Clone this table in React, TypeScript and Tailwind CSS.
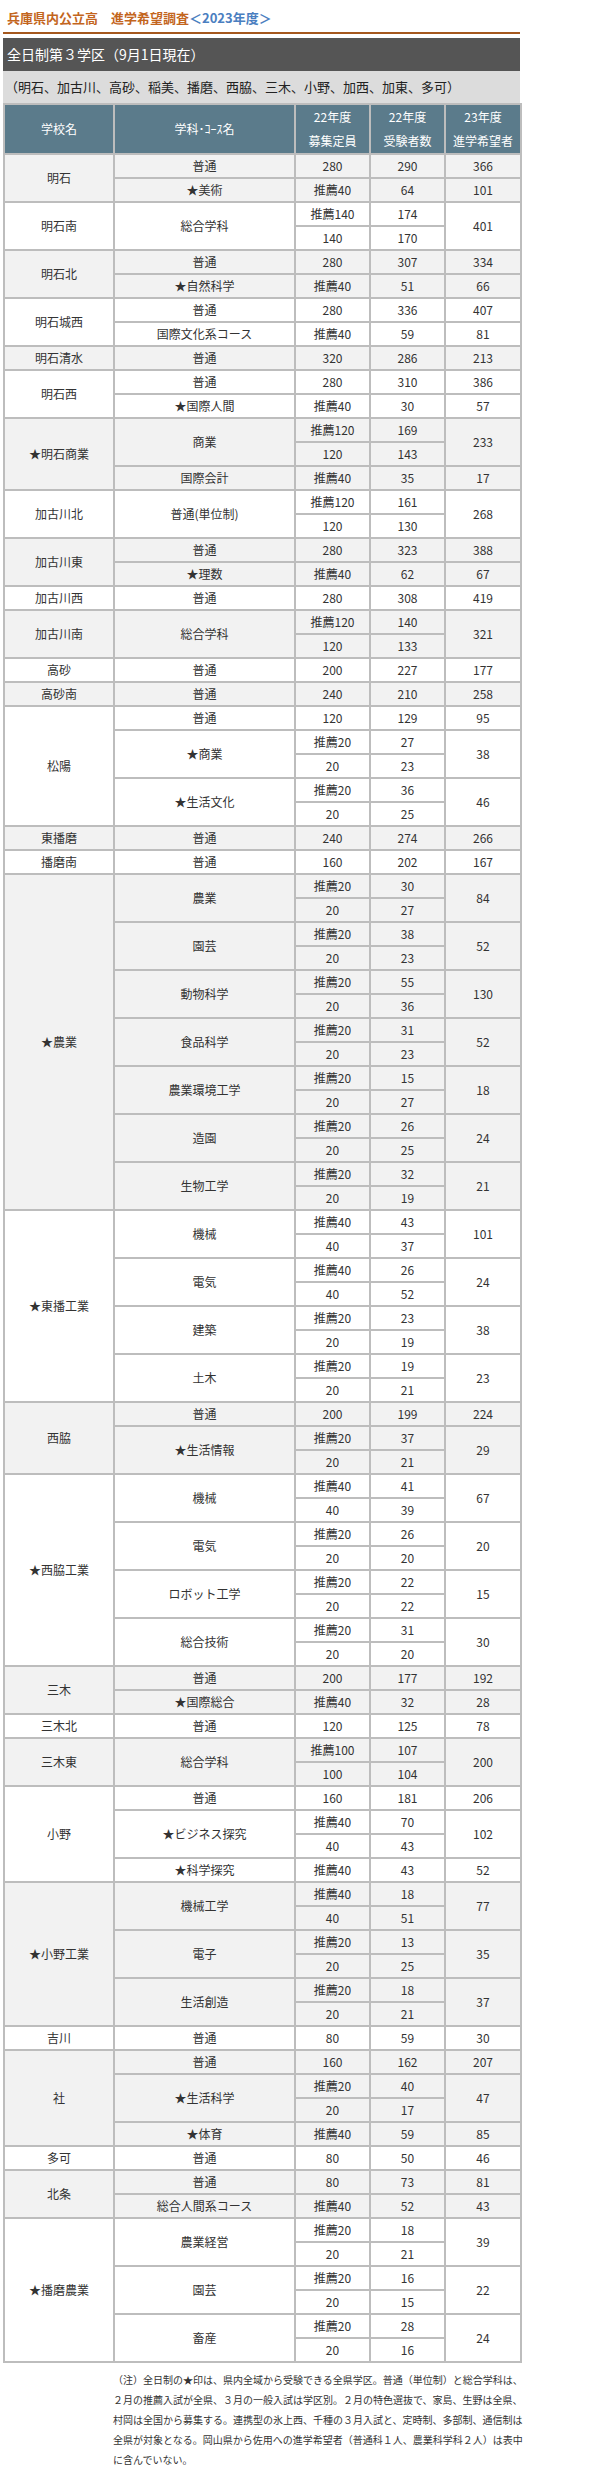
import React from "react";

type Sub = { c: string; r: [string, string][]; h: string };
type School = { name: string; subs: Sub[] };

const S = (c: string, a: string, b: string, h: string): Sub => ({ c, r: [[a, b]], h });
const D = (c: string, q: string, a: string, n: string, b: string, h: string): Sub => ({
  c,
  r: [
    [q, a],
    [n, b],
  ],
  h,
});

const schools: School[] = [
  { name: "明石", subs: [S("普通", "280", "290", "366"), S("★美術", "推薦40", "64", "101")] },
  { name: "明石南", subs: [D("総合学科", "推薦140", "174", "140", "170", "401")] },
  { name: "明石北", subs: [S("普通", "280", "307", "334"), S("★自然科学", "推薦40", "51", "66")] },
  { name: "明石城西", subs: [S("普通", "280", "336", "407"), S("国際文化系コース", "推薦40", "59", "81")] },
  { name: "明石清水", subs: [S("普通", "320", "286", "213")] },
  { name: "明石西", subs: [S("普通", "280", "310", "386"), S("★国際人間", "推薦40", "30", "57")] },
  { name: "★明石商業", subs: [D("商業", "推薦120", "169", "120", "143", "233"), S("国際会計", "推薦40", "35", "17")] },
  { name: "加古川北", subs: [D("普通(単位制)", "推薦120", "161", "120", "130", "268")] },
  { name: "加古川東", subs: [S("普通", "280", "323", "388"), S("★理数", "推薦40", "62", "67")] },
  { name: "加古川西", subs: [S("普通", "280", "308", "419")] },
  { name: "加古川南", subs: [D("総合学科", "推薦120", "140", "120", "133", "321")] },
  { name: "高砂", subs: [S("普通", "200", "227", "177")] },
  { name: "高砂南", subs: [S("普通", "240", "210", "258")] },
  {
    name: "松陽",
    subs: [
      S("普通", "120", "129", "95"),
      D("★商業", "推薦20", "27", "20", "23", "38"),
      D("★生活文化", "推薦20", "36", "20", "25", "46"),
    ],
  },
  { name: "東播磨", subs: [S("普通", "240", "274", "266")] },
  { name: "播磨南", subs: [S("普通", "160", "202", "167")] },
  {
    name: "★農業",
    subs: [
      D("農業", "推薦20", "30", "20", "27", "84"),
      D("園芸", "推薦20", "38", "20", "23", "52"),
      D("動物科学", "推薦20", "55", "20", "36", "130"),
      D("食品科学", "推薦20", "31", "20", "23", "52"),
      D("農業環境工学", "推薦20", "15", "20", "27", "18"),
      D("造園", "推薦20", "26", "20", "25", "24"),
      D("生物工学", "推薦20", "32", "20", "19", "21"),
    ],
  },
  {
    name: "★東播工業",
    subs: [
      D("機械", "推薦40", "43", "40", "37", "101"),
      D("電気", "推薦40", "26", "40", "52", "24"),
      D("建築", "推薦20", "23", "20", "19", "38"),
      D("土木", "推薦20", "19", "20", "21", "23"),
    ],
  },
  { name: "西脇", subs: [S("普通", "200", "199", "224"), D("★生活情報", "推薦20", "37", "20", "21", "29")] },
  {
    name: "★西脇工業",
    subs: [
      D("機械", "推薦40", "41", "40", "39", "67"),
      D("電気", "推薦20", "26", "20", "20", "20"),
      D("ロボット工学", "推薦20", "22", "20", "22", "15"),
      D("総合技術", "推薦20", "31", "20", "20", "30"),
    ],
  },
  { name: "三木", subs: [S("普通", "200", "177", "192"), S("★国際総合", "推薦40", "32", "28")] },
  { name: "三木北", subs: [S("普通", "120", "125", "78")] },
  { name: "三木東", subs: [D("総合学科", "推薦100", "107", "100", "104", "200")] },
  {
    name: "小野",
    subs: [
      S("普通", "160", "181", "206"),
      D("★ビジネス探究", "推薦40", "70", "40", "43", "102"),
      S("★科学探究", "推薦40", "43", "52"),
    ],
  },
  {
    name: "★小野工業",
    subs: [
      D("機械工学", "推薦40", "18", "40", "51", "77"),
      D("電子", "推薦20", "13", "20", "25", "35"),
      D("生活創造", "推薦20", "18", "20", "21", "37"),
    ],
  },
  { name: "吉川", subs: [S("普通", "80", "59", "30")] },
  {
    name: "社",
    subs: [
      S("普通", "160", "162", "207"),
      D("★生活科学", "推薦20", "40", "20", "17", "47"),
      S("★体育", "推薦40", "59", "85"),
    ],
  },
  { name: "多可", subs: [S("普通", "80", "50", "46")] },
  { name: "北条", subs: [S("普通", "80", "73", "81"), S("総合人間系コース", "推薦40", "52", "43")] },
  {
    name: "★播磨農業",
    subs: [
      D("農業経営", "推薦20", "18", "20", "21", "39"),
      D("園芸", "推薦20", "16", "20", "15", "22"),
      D("畜産", "推薦20", "28", "20", "16", "24"),
    ],
  },
];

const td = "border-2 border-[#bdbdbd] p-0 text-center align-middle leading-[22px] whitespace-nowrap";
const th = "border-2 border-[#bdbdbd] p-0 text-center align-middle leading-[24px] font-normal text-white whitespace-nowrap";

export default function App() {
  const rows: React.ReactNode[] = [];
  schools.forEach((s, si) => {
    const bg = si % 2 === 0 ? "bg-[#f2f2f2]" : "bg-white";
    const total = s.subs.reduce((a, x) => a + x.r.length, 0);
    s.subs.forEach((sub, subi) => {
      sub.r.forEach((r, ri) => {
        rows.push(
          <tr key={`${si}-${subi}-${ri}`} className={bg}>
            {subi === 0 && ri === 0 && (
              <td rowSpan={total} className={td}>
                {s.name}
              </td>
            )}
            {ri === 0 && (
              <td rowSpan={sub.r.length} className={td}>
                {sub.c}
              </td>
            )}
            <td className={td}>{r[0]}</td>
            <td className={td}>{r[1]}</td>
            {ri === 0 && (
              <td rowSpan={sub.r.length} className={td}>
                {sub.h}
              </td>
            )}
          </tr>
        );
      });
    });
  });

  return (
    <div className="min-h-[2477px] w-[592px] bg-white font-['Noto_Sans_CJK_JP',sans-serif] text-[#333]">
      <div className="ml-[3px] w-[517px]">
        <div className="pl-[4px] pt-[8px] pb-[4px] text-[13px] font-bold leading-[20px] whitespace-nowrap">
          <span className="text-[#c3651d]">兵庫県内公立高　進学希望調査</span>
          <span className="text-[#4a7ec0]">＜2023年度＞</span>
        </div>
        <div className="h-[2px] bg-[#a5581e]" />
        <div className="mt-[4px] flex h-[33px] items-center bg-[#555555] pl-[4px] text-[14px] text-white whitespace-nowrap">
          全日制第３学区（9月1日現在）
        </div>
        <div className="flex h-[32px] items-center bg-[#dcdcdc] pl-[2px] text-[13px] text-[#222] whitespace-nowrap">
          （明石、加古川、高砂、稲美、播磨、西脇、三木、小野、加西、加東、多可）
        </div>
        <table className="w-[517px] table-fixed border-collapse text-[12px]">
          <colgroup>
            <col className="w-[110px]" />
            <col className="w-[181px]" />
            <col className="w-[75px]" />
            <col className="w-[75px]" />
            <col className="w-[76px]" />
          </colgroup>
          <thead>
            <tr className="bg-[#5b7b8b]">
              <th className={th}>学校名</th>
              <th className={th}>学科･ｺｰｽ名</th>
              <th className={th}>
                22年度
                <br />
                募集定員
              </th>
              <th className={th}>
                22年度
                <br />
                受験者数
              </th>
              <th className={th}>
                23年度
                <br />
                進学希望者
              </th>
            </tr>
          </thead>
          <tbody>{rows}</tbody>
        </table>
        <div className="mt-[7px] pl-[110px] text-[10px] leading-[20px] whitespace-nowrap text-[#333]">
          （注）全日制の★印は、県内全域から受験できる全県学区。普通（単位制）と総合学科は、
          <br />
          ２月の推薦入試が全県、３月の一般入試は学区別。２月の特色選抜で、家島、生野は全県、
          <br />
          村岡は全国から募集する。連携型の氷上西、千種の３月入試と、定時制、多部制、通信制は
          <br />
          全県が対象となる。岡山県から佐用への進学希望者（普通科１人、農業科学科２人）は表中
          <br />
          に含んでいない。
        </div>
      </div>
    </div>
  );
}
